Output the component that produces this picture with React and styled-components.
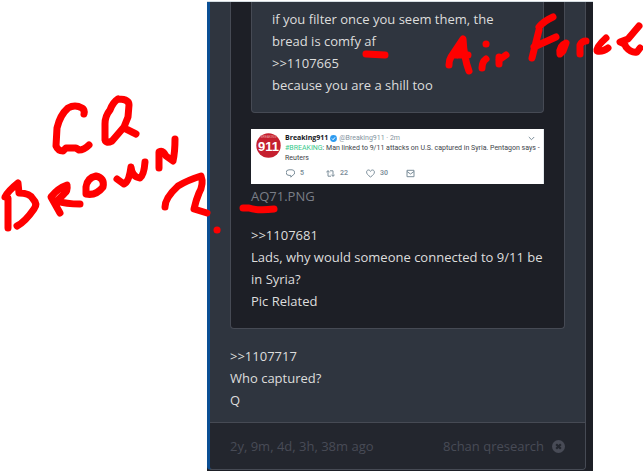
import React from "react";
import styled, { createGlobalStyle } from "styled-components";

export default function App() {
  return (
    <Page>
      <GlobalStyle />
      <Thread>
        <Card>
          <CardBody>
            <Quote $nested>
              <Quote $top>
                <Line>
                  if you filter once you seem them, the bread is comfy af
                </Line>
                <Line>&gt;&gt;1107665</Line>
                <Line>because you are a shill too</Line>
              </Quote>
              <Tweet />
              <FileName href="#file">AQ71.PNG</FileName>
              <Line>&gt;&gt;1107681</Line>
              <Line>
                Lads, why would someone connected to 9/11 be in Syria?
              </Line>
              <Line>Pic Related</Line>
            </Quote>
            <Line>&gt;&gt;1107717</Line>
            <Line>Who captured?</Line>
            <Line>Q</Line>
          </CardBody>
          <CardFooter>
            <span>2y, 9m, 4d, 3h, 38m ago</span>
            <Source>
              8chan qresearch
              <CloseButton type="button" aria-label="Close">
                <svg width="13" height="13" viewBox="0 0 13 13">
                  <circle cx="6.5" cy="6.5" r="6.5" fill="currentColor" />
                  <path
                    d="M4.2 4.2 8.8 8.8M8.8 4.2 4.2 8.8"
                    stroke="#23262e"
                    strokeWidth="2.2"
                  />
                </svg>
              </CloseButton>
            </Source>
          </CardFooter>
        </Card>
      </Thread>
      <Handwriting />
    </Page>
  );
}

function Tweet() {
  return (
    <TweetCard>
      <Avatar viewBox="0 0 25 25" aria-label="Breaking911">
        <circle cx="12.5" cy="12.5" r="12.2" fill="#c5202f" />
        <text x="12.5" y="5" fontSize="3" textAnchor="middle" fill="#e9a5aa">
          BREAKING
        </text>
        <text
          x="12.5"
          y="18"
          fontSize="13"
          fontWeight="700"
          textAnchor="middle"
          fill="#fff"
        >
          911
        </text>
      </Avatar>
      <TweetMain>
        <TweetHead>
          <Author>Breaking911</Author>
          <svg width="7" height="7" viewBox="0 0 7 7">
            <circle cx="3.5" cy="3.5" r="3.4" fill="#2d9bf0" />
            <path d="M2 3.6 3.1 4.7 5 2.4" stroke="#fff" fill="none" />
          </svg>
          <Handle>@Breaking911 · 2m</Handle>
          <Chevron width="7" height="5" viewBox="0 0 7 5">
            <path d="M.8 1 3.5 3.7 6.2 1" stroke="#7b8d99" fill="none" />
          </Chevron>
        </TweetHead>
        <TweetText>
          <a href="#breaking">#BREAKING</a>: Man linked to 9/11 attacks on U.S.
          captured in Syria. Pentagon says -<br />
          Reuters
        </TweetText>
        <TweetActions>
          <Action type="button">
            <svg width="9" height="9" viewBox="0 0 9 9">
              <path d="M3 .8h3a2.8 2.8 0 0 1 .9 5.4L4.8 8.2V6.4H3A2.8 2.8 0 0 1 3 .8Z" />
            </svg>
            5
          </Action>
          <Action type="button">
            <svg width="9" height="9" viewBox="0 0 9 9">
              <path d="M.3 3.4 2 1.6l1.7 1.8M2 1.8v5.4h3M4 1.8h3v5.4M5.3 5.6 7 7.4l1.7-1.8" />
            </svg>
            22
          </Action>
          <Action type="button">
            <svg width="9" height="9" viewBox="0 0 9 9">
              <path d="M4.5 8C2 6.3.6 4.7.6 3.1.6.6 3.6.3 4.5 2.4 5.4.3 8.4.6 8.4 3.1 8.4 4.7 7 6.3 4.5 8Z" />
            </svg>
            30
          </Action>
          <Action type="button" aria-label="Message">
            <svg width="9" height="9" viewBox="0 0 9 9">
              <path d="M1 1.3h7v6.4H1ZM1 2.5l3.5 2.5L8 2.5" />
            </svg>
          </Action>
        </TweetActions>
      </TweetMain>
    </TweetCard>
  );
}

// freehand notes in red marker, lying over the thread
function Handwriting() {
  return (
    <Ink width="643" height="471" viewBox="0 0 643 471" aria-hidden="true">
      {/* CQ */}
      <path d="M84 114Q85 110 82 108Q75 104 68 108Q60 115 57 128L56 146Q58 151 63 151L66 148H76L79 150Q84 150 89 145" />
      <path d="M118 99Q129 99 129 105L128 117L124 127L112 141Q106 144 105 140V124Q105 116 110 110Q113 102 118 99M124 128 136 134" />
      {/* BROWN? */}
      <path d="M8 228V198L5 197Q8 191 18 183L19 193Q30 193 33 199Q38 204 34 209Q25 222 17 226" />
      <path d="M60 213 51 197Q58 188 67 185Q68 191 64 194L57 201Q66 204 80 204" />
      <path d="M96 176Q105 178 103 187Q96 196 86 194V187Q87 178 96 176Z" />
      <path d="M117 179Q121 182 124 184Q129 182 131 167Q132 177 140 178Q144 175 145 162" />
      <path d="M159 168V152Q163 150 166 156L173 161Q175 152 175 139" />
      <path d="M165 207Q165 198 178 186Q188 180 201 176Q204 184 199 193Q196 200 194 209L207 213" />
      <path d="M217 230h.1" />
      {/* underlines */}
      <path d="M366 54 385 55" />
      <path d="M243 208H249Q258 211 274 209" />
      {/* Air */}
      <path d="M449 65Q449 60 451 57L463 39Q464 58 469 71M455 55 468 55M462 46 457 55" />
      <path d="M482 68Q482 62 486 59M486 44h.1" />
      <path d="M499 64V57M499 60 506 55" />
      {/* Force */}
      <path d="M532 58 539 30M539 27Q544 21 553 17M534 47 556 37" />
      <path d="M566 43Q559 46 560 54L563 51Z" />
      <path d="M580 54V45Q582 41 586 41" />
      <path d="M606 38Q596 47 597 51Q603 52 608 48" />
      <path d="M639 26 628 39 620 42Q625 43 626 47Q631 53 637 52L640 48" />
    </Ink>
  );
}

const GlobalStyle = createGlobalStyle`
  * {
    box-sizing: border-box;
  }
  body {
    margin: 0;
    background: #fff;
    font-family: "Open Sans", "Noto Sans", sans-serif;
    font-size: 13px;
    line-height: 22px;
    color: #ddd;
  }
  button {
    font: inherit;
    color: inherit;
    background: none;
    border: none;
    padding: 0;
  }
`;

const Page = styled.main`
  position: relative;
  padding: 1px 50px 0 207px;
`;

const Thread = styled.div`
  background: #1d1f26;
  border-top: 1px solid #d5dde2;
  padding: 0 7px 1px 0;
`;

const Card = styled.article`
  background: #2f353f;
  border: 1px solid #464a54;
  border-top: none;
  border-left: 3px solid #0b4f94;
  border-radius: 0 0 4px 4px;
`;

const CardBody = styled.div`
  padding: 0 20px 11px;
`;

const Quote = styled.blockquote`
  margin: 0 0 16px;
  padding: ${(props) => (props.$top ? "6px 20px 16px" : "0 20px 16px")};
  background: ${(props) => (props.$nested ? "#1d1f26" : "#2f353f")};
  border: 1px solid #464a54;
  border-top: none;
  border-radius: 0 0 4px 4px;
`;

const Line = styled.div`
  overflow-wrap: break-word;
`;

const FileName = styled.a`
  display: block;
  margin: 1px 0 17px;
  color: #7a7e87;
  text-decoration: none;
`;

const CardFooter = styled.footer`
  display: flex;
  justify-content: space-between;
  padding: 12px 20px;
  background: #23262e;
  border-top: 1px solid #464a54;
  border-radius: 0 0 3px 3px;
  color: #484b56;
`;

const Source = styled.span`
  display: flex;
  align-items: center;
  gap: 8px;
`;

const CloseButton = styled.button`
  display: flex;
`;

const TweetCard = styled.div`
  display: flex;
  gap: 4px;
  height: 55px;
  padding: 4px 8px 0 5px;
  background: #fff;
  border-right: 1px solid #e3e9ed;
  color: #3d444a;
  font-family: Roboto, sans-serif;
  font-size: 7px;
  line-height: 10px;
`;

const Avatar = styled.svg`
  flex: none;
  width: 25px;
  height: 25px;
  font-family: "Liberation Sans", sans-serif;
`;

const TweetMain = styled.div`
  flex: 1;
  min-width: 0;
`;

const TweetHead = styled.div`
  display: flex;
  align-items: center;
  gap: 2px;
`;

const Author = styled.b`
  color: #14171a;
  font-family: "Open Sans", sans-serif;
`;

const Handle = styled.span`
  color: #84939e;
`;

const Chevron = styled.svg`
  margin-left: auto;
`;

const TweetText = styled.div`
  white-space: nowrap;

  a {
    color: #35c98b;
    text-decoration: none;
  }
`;

const TweetActions = styled.div`
  display: flex;
  margin-top: 5px;
  padding-left: 1px;
`;

const Action = styled.button`
  display: flex;
  align-items: center;
  gap: 5px;
  width: 40px;
  color: #7b8d99;
  font-weight: 600;

  path {
    fill: none;
    stroke: #7b8d99;
  }
`;

const Ink = styled.svg`
  position: absolute;
  top: 0;
  left: 0;
  pointer-events: none;
  fill: none;
  stroke: #f00;
  stroke-width: 7px;
  stroke-linecap: round;
  stroke-linejoin: round;
`;
